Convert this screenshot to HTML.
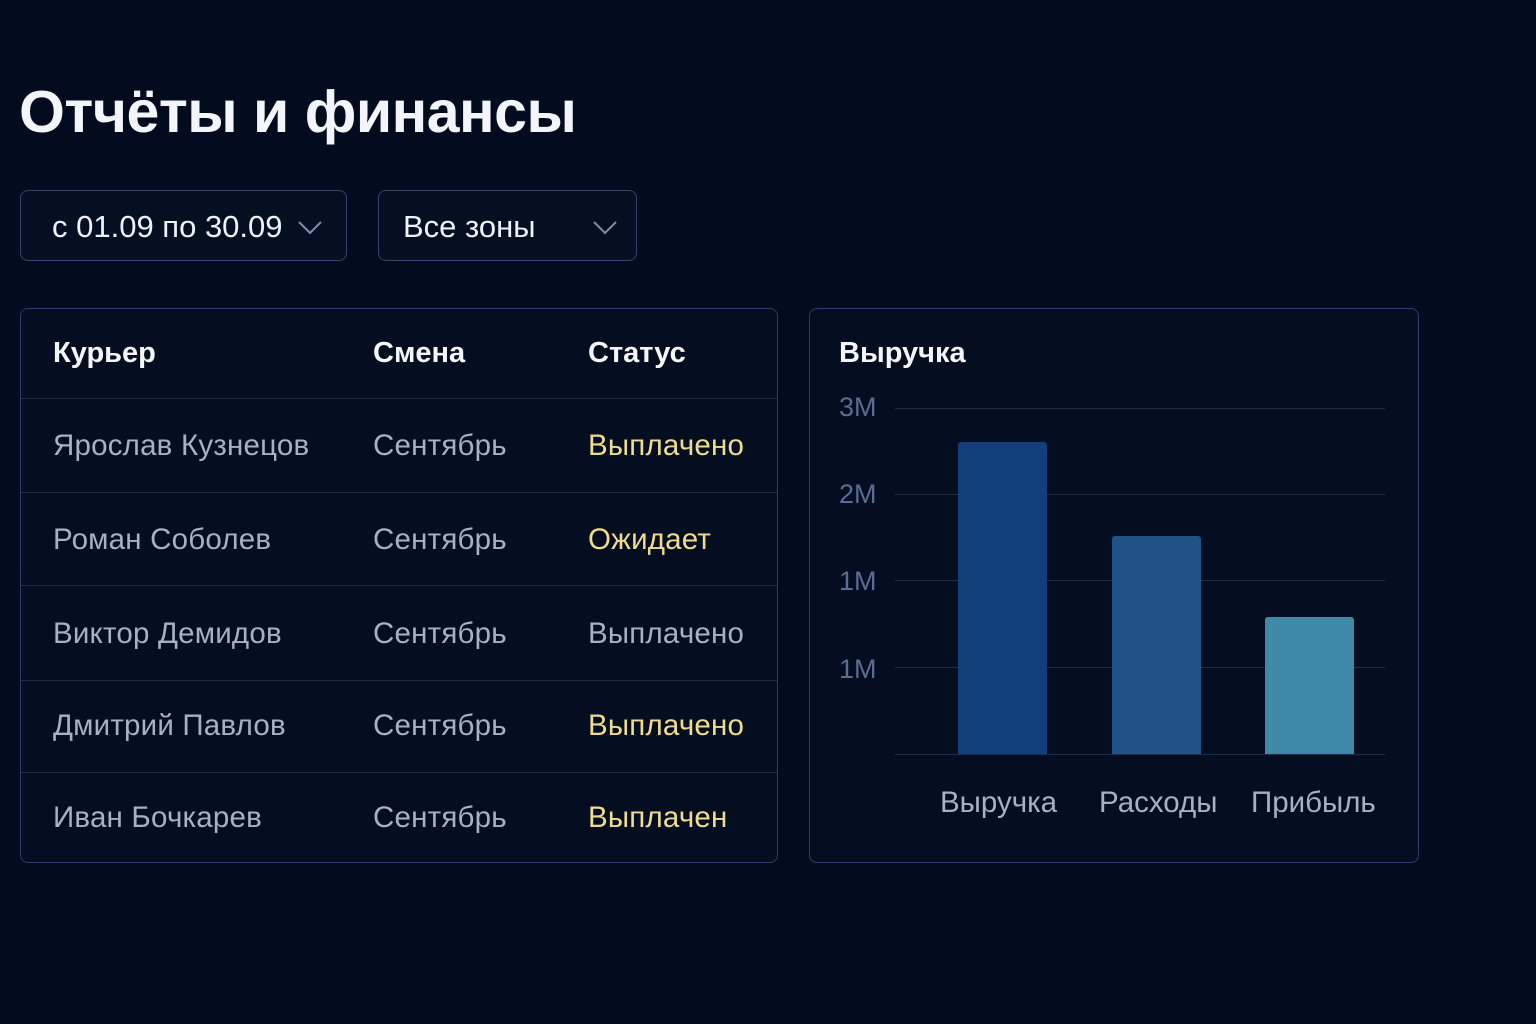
<!DOCTYPE html>
<html><head><meta charset="utf-8"><style>
*{margin:0;padding:0;box-sizing:border-box}
body{width:1536px;height:1024px;background:#030c1e;font-family:"Liberation Sans",sans-serif;position:relative;overflow:hidden;color:#fff}
.abs{position:absolute;white-space:nowrap}
h1{position:absolute;left:19px;top:78px;font-size:59px;font-weight:bold;color:#f2f5fa;letter-spacing:-0.5px}
.sel{position:absolute;top:190px;height:71px;border:1px solid #34426a;border-radius:8px;background:#050f22;font-size:31px;color:#eef1f6;line-height:71px}
.card{position:absolute;top:308px;height:555px;border:1px solid #2e3c66;border-radius:8px;background:#040e20}
.row{position:absolute;left:0;right:0;border-top:1px solid #1f2b4a}
.t{position:absolute;font-size:29.5px;color:#a6b1c8;white-space:nowrap;letter-spacing:0.2px}
.h{font-weight:bold;color:#f4f6fa;font-size:29px;letter-spacing:0}
.y{color:#f0dc8e}
.g{position:absolute;left:85px;width:490px;height:1px;background:#1e2c4e}
.yl{position:absolute;left:29px;font-size:27px;color:#5a6d92}
.bar{position:absolute;width:89px;border-radius:3px 3px 0 0}
.xl{position:absolute;font-size:29.5px;color:#a6b1c8;top:477px}
</style></head><body>
<h1>Отчёты и финансы</h1>
<div class="sel" style="left:20px;width:327px;padding-left:31px">с 01.09 по 30.09
<svg class="abs" style="left:277px;top:30px" width="24" height="14"><path d="M1 1 L12 12 L23 1" stroke="#7e8dab" stroke-width="2" fill="none"/></svg></div>
<div class="sel" style="left:378px;width:259px;padding-left:24px">Все зоны
<svg class="abs" style="left:214px;top:30px" width="24" height="14"><path d="M1 1 L12 12 L23 1" stroke="#7e8dab" stroke-width="2" fill="none"/></svg></div>

<div class="card" style="left:20px;width:758px">
<div class="t h" style="left:32px;top:28px">Курьер</div>
<div class="t h" style="left:352px;top:28px">Смена</div>
<div class="t h" style="left:567px;top:28px">Статус</div>
<div class="row" style="top:89px"></div>
<div class="row" style="top:183px"></div>
<div class="row" style="top:276px"></div>
<div class="row" style="top:371px"></div>
<div class="row" style="top:463px"></div>
<div class="t" style="left:32px;top:120px">Ярослав Кузнецов</div><div class="t" style="left:352px;top:120px">Сентябрь</div><div class="t y" style="left:567px;top:120px">Выплачено</div>
<div class="t" style="left:32px;top:214px">Роман Соболев</div><div class="t" style="left:352px;top:214px">Сентябрь</div><div class="t y" style="left:567px;top:214px">Ожидает</div>
<div class="t" style="left:32px;top:308px">Виктор Демидов</div><div class="t" style="left:352px;top:308px">Сентябрь</div><div class="t" style="left:567px;top:308px">Выплачено</div>
<div class="t" style="left:32px;top:400px">Дмитрий Павлов</div><div class="t" style="left:352px;top:400px">Сентябрь</div><div class="t y" style="left:567px;top:400px">Выплачено</div>
<div class="t" style="left:32px;top:492px">Иван Бочкарев</div><div class="t" style="left:352px;top:492px">Сентябрь</div><div class="t y" style="left:567px;top:492px">Выплачен</div>
</div>

<div class="card" style="left:809px;width:610px">
<div class="t h" style="left:29px;top:28px">Выручка</div>
<div class="g" style="top:99px"></div><div class="g" style="top:185px"></div><div class="g" style="top:271px"></div><div class="g" style="top:358px"></div><div class="g" style="top:445px"></div>
<div class="yl" style="top:83px">3M</div><div class="yl" style="top:170px">2M</div><div class="yl" style="top:257px">1M</div><div class="yl" style="top:345px">1M</div>
<div class="bar" style="left:148px;top:133px;height:312px;background:#123f7b"></div>
<div class="bar" style="left:302px;top:227px;height:218px;background:#1f5386"></div>
<div class="bar" style="left:455px;top:308px;height:137px;background:#3e8aa6"></div>
<div class="xl" style="left:130px">Выручка</div>
<div class="xl" style="left:289px">Расходы</div>
<div class="xl" style="left:441px">Прибыль</div>
</div>
</body></html>
